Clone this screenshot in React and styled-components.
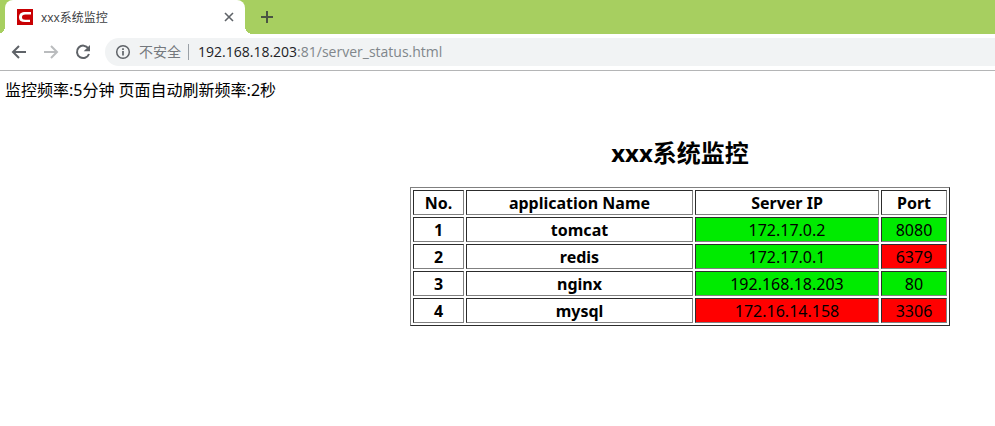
import React from "react";
import styled, { createGlobalStyle } from "styled-components";

const GlobalStyle = createGlobalStyle`
  * { box-sizing: border-box; }
  body {
    margin: 0;
    background: #fff;
    color: #000;
    font-family: "Noto Sans", "Noto Sans CJK SC", sans-serif;
    font-size: 16px;
  }
  button { padding: 0; border: 0; background: none; font: inherit; color: inherit; }
`;

const Browser = styled.div`
  display: flex;
  flex-direction: column;
  min-height: 100vh;
  overflow: hidden;
`;

const TabStrip = styled.div`
  display: flex;
  align-items: center;
  height: 34px;
  padding-left: 5px;
  background: #a7cf60;
`;

const Tab = styled.div`
  position: relative;
  display: flex;
  align-items: center;
  flex: 0 0 240px;
  height: 34px;
  padding: 0 10px 0 12px;
  border-radius: 8px 8px 0 0;
  background: #fff;
  color: #3c4043;
  font-family: "Open Sans", "Noto Sans CJK SC", sans-serif;
  font-size: 12px;
  line-height: 16px;

  &::before,
  &::after {
    content: "";
    position: absolute;
    bottom: 0;
    width: 8px;
    height: 8px;
  }
  &::before {
    right: 100%;
    background: radial-gradient(circle at 0 0, transparent 8px, #fff 8px);
  }
  &::after {
    left: 100%;
    background: radial-gradient(circle at 100% 0, transparent 8px, #fff 8px);
  }
`;

const TabTitle = styled.span`
  flex: 1;
  margin-left: 8px;
  padding-top: 2px;
  white-space: nowrap;
`;

const IconButton = styled.button`
  display: grid;
  place-items: center;
  flex: none;
  width: ${(p) => p.$size}px;
  height: ${(p) => p.$size}px;
  color: ${(p) => (p.disabled ? "#babcbe" : "#5f6368")};
`;

const NewTabButton = styled(IconButton)`
  margin-left: 14px;
  color: #4a5443;
`;

const Icon = styled.svg`
  display: block;
  flex: none;
  fill: none;
  stroke: currentColor;
  stroke-width: 2;
`;

const Toolbar = styled.div`
  display: flex;
  align-items: center;
  height: 37px;
  padding: 0 0 1px 9px;
  border-bottom: 1px solid #b4b5b6;
`;

const NavButtons = styled.div`
  display: flex;
  gap: 12px;
  margin-right: 12px;
`;

const AddressBar = styled.div`
  display: flex;
  align-items: center;
  flex: 1;
  height: 28px;
  padding-left: 10px;
  border-radius: 14px 0 0 14px;
  background: #f1f3f4;
  color: #5f6368;
  font-family: "Open Sans", "Noto Sans CJK SC", sans-serif;
  font-size: 14px;
  line-height: 20px;
  white-space: nowrap;
`;

const Security = styled.span`
  margin-left: 8px;
  padding-right: 7px;
  border-right: 1px solid #9aa0a6;
  color: #74787d;
  line-height: 16px;
`;

const Url = styled.span`
  margin-left: 9px;
  color: #80868b;
`;

const Host = styled.span`
  color: #202124;
`;

const Notice = styled.p`
  margin: 0;
  padding: 8px 5px 0;
  line-height: 22px;
`;

const Monitor = styled.main`
  display: flex;
  flex-direction: column;
  align-items: center;
  padding: 36px 0 0 365px;
`;

const Heading = styled.h1`
  margin: 0 0 18px;
  font-size: 24px;
  line-height: 32px;
  font-weight: 700;
`;

const StatusTable = styled.table`
  width: 100%;
  max-width: 540px;
  border: 1px solid;
  border-color: #808080 #2c2c2c #2c2c2c #808080;
  border-collapse: separate;
  border-spacing: 2px;
  table-layout: fixed;
`;

const Column = styled.col`
  width: ${(p) => p.$width};
`;

const cellColors = { up: "#00eb00", down: "#ff0000" };

const Cell = styled.td`
  height: 25px;
  padding: 0;
  border: 1px solid;
  border-color: #2c2c2c #808080 #808080 #2c2c2c;
  background: ${(p) => cellColors[p.$status] || "transparent"};
  text-align: center;
  line-height: 22px;
`;

const servers = [
  { name: "tomcat", ip: "172.17.0.2", port: "8080", host: "up", service: "up" },
  { name: "redis", ip: "172.17.0.1", port: "6379", host: "up", service: "down" },
  { name: "nginx", ip: "192.168.18.203", port: "80", host: "up", service: "up" },
  { name: "mysql", ip: "172.16.14.158", port: "3306", host: "down", service: "down" },
];

const Favicon = () => (
  <Icon width="16" height="16" viewBox="0 0 16 16" aria-hidden="true">
    <path d="M0 0h16v16H0z" fill="#c80003" stroke="none" />
    <path
      d="M14 3v2.5H8.5C6 5.500 5 6.500 5 8.200s1 2.500 3.300 2.500H13V13H8C4 13 2 11.500 2 8.400 2 4.800 4.300 3 8.500 3z"
      fill="#fff"
      stroke="none"
    />
  </Icon>
);

export default function App() {
  return (
    <Browser>
      <GlobalStyle />
      <TabStrip>
        <Tab>
          <Favicon />
          <TabTitle>xxx系统监控</TabTitle>
          <IconButton $size={12} aria-label="关闭标签页">
            <Icon width="12" height="12" viewBox="0 0 12 12">
              <path d="M2 2l8 8M10 2l-8 8" strokeWidth="1.6" />
            </Icon>
          </IconButton>
        </Tab>
        <NewTabButton $size={16} aria-label="新标签页">
          <Icon width="16" height="16" viewBox="0 0 16 16">
            <path d="M8 2v12M2 8h12" />
          </Icon>
        </NewTabButton>
      </TabStrip>
      <Toolbar>
        <NavButtons>
          <IconButton $size={20} aria-label="后退">
            <Icon width="20" height="20" viewBox="0 0 20 20">
              <path d="M17 10H4.5M10 4l-6 6 6 6" />
            </Icon>
          </IconButton>
          <IconButton $size={20} disabled aria-label="前进">
            <Icon width="20" height="20" viewBox="0 0 20 20">
              <path d="M3 10h12.5M10 4l6 6-6 6" />
            </Icon>
          </IconButton>
          <IconButton $size={20} aria-label="重新加载">
            <Icon width="20" height="20" viewBox="0 0 20 20">
              <path d="M15.3 6.3A6.2 6.2 0 1 0 16 12" />
              <path d="M17 3v6.3h-6.3z" fill="currentColor" stroke="none" />
            </Icon>
          </IconButton>
        </NavButtons>
        <AddressBar>
          <Icon width="16" height="16" viewBox="0 0 16 16" aria-hidden="true">
            <circle cx="8" cy="8" r="6.3" strokeWidth="1.5" />
            <path d="M8 7v4.5M8 4.3v1.7" strokeWidth="1.7" />
          </Icon>
          <Security>不安全</Security>
          <Url>
            <Host>192.168.18.203</Host>:81/server_status.html
          </Url>
        </AddressBar>
      </Toolbar>
      <Notice>监控频率:5分钟 页面自动刷新频率:2秒</Notice>
      <Monitor>
        <Heading>xxx系统监控</Heading>
        <StatusTable>
          <colgroup>
            <Column $width="51px" />
            <Column />
            <Column $width="184px" />
            <Column $width="66px" />
          </colgroup>
          <thead>
            <tr>
              <Cell as="th" scope="col">No.</Cell>
              <Cell as="th" scope="col">application Name</Cell>
              <Cell as="th" scope="col">Server IP</Cell>
              <Cell as="th" scope="col">Port</Cell>
            </tr>
          </thead>
          <tbody>
            {servers.map((server, index) => (
              <tr key={server.name}>
                <Cell as="th" scope="row">{index + 1}</Cell>
                <Cell as="th">{server.name}</Cell>
                <Cell $status={server.host}>{server.ip}</Cell>
                <Cell $status={server.service}>{server.port}</Cell>
              </tr>
            ))}
          </tbody>
        </StatusTable>
      </Monitor>
    </Browser>
  );
}
